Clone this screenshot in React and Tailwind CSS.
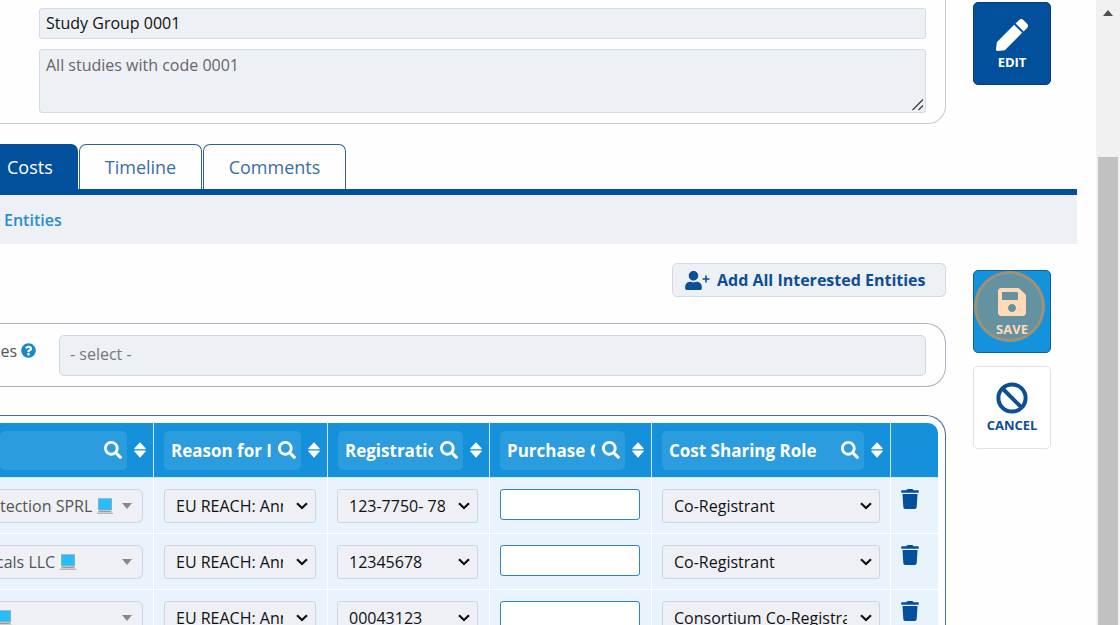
import React from "react";
import { FaPen, FaSave, FaSearch, FaTrash, FaUser, FaQuestionCircle } from "react-icons/fa";

const rows = [
  { entity: "tection SPRL", reason: "EU REACH: Annex VII", registration: "123-7750- 78", role: "Co-Registrant", shift: "" },
  { entity: "cals LLC", reason: "EU REACH: Annex VII", registration: "12345678", role: "Co-Registrant", shift: "-ml-1" },
  { entity: "", reason: "EU REACH: Annex VII", registration: "00043123", role: "Consortium Co-Registrant", shift: "-ml-1" },
];

const headers = ["", "Reason for Interest", "Registration", "Purchase Order", "Cost Sharing Role"];

function SortIcon() {
  return (
    <svg viewBox="0 0 12 16" className="h-4 w-3" fill="currentColor" aria-hidden="true">
      <path d="M6 0.2 L11.6 6.2 Q12 7.2 11 7.2 H1 Q0 7.2 0.4 6.2 Z" />
      <path d="M6 15.8 L11.6 9.6 Q12 8.6 11 8.6 H1 Q0 8.6 0.4 9.6 Z" />
    </svg>
  );
}

function Laptop() {
  return (
    <svg viewBox="0 0 16 16" className="h-4 w-4 shrink-0" aria-hidden="true">
      <path d="M1 0.2 H15 V12.4 H1 Z" fill="#b3aaa6" />
      <path d="M1.6 0.8 H14.4 V11.6 H1.6 Z" fill="#26bdf8" />
      <path d="M1.5 12.4 H14.5 L16 15.5 H0 Z" fill="#cfcfd1" />
      <path d="M2.4 12.7 H13.6 L14 13.9 H2 Z" fill="#99999b" />
      <path d="M0 15 H16 V16 H0 Z" fill="#b5b5b8" />
    </svg>
  );
}

function Dropdown({ label, value }) {
  return (
    <div className="relative">
      <select
        aria-label={label}
        defaultValue={value}
        className="block h-[34px] w-full appearance-none rounded-[3px] border border-[#cbd5e3] bg-[#eef0f5] pr-8 pb-[1px] pl-[11px] text-base text-[#111]"
      >
        <option>{value}</option>
      </select>
      <svg viewBox="0 0 12 8" className="pointer-events-none absolute top-[13px] right-2 h-2 w-3" fill="none" stroke="#111" strokeWidth="2.2" aria-hidden="true">
        <path d="M1 1.2 L6 6 L11 1.2" />
      </svg>
    </div>
  );
}

export default function App() {
  return (
    <div className="flex h-screen overflow-hidden bg-[#fefefe] font-['Open_Sans','Noto_Sans',sans-serif] text-base text-[#555]">
      <main className="min-w-0 flex-1 overflow-hidden pr-[19px]">
        <section className="flex items-start gap-[27px] pr-[26px]">
          <div className="flex min-w-0 flex-1 flex-col gap-[10px] rounded-br-[18px] border-r border-b border-[#c3ccd6] pt-2 pr-[19px] pb-[10px] pl-[39px]">
            <input
              aria-label="Name"
              defaultValue="Study Group 0001"
              className="h-[31px] w-full rounded-[3px] border border-[#d3dbe6] bg-[#edf0f5] px-[6px] pb-[1px] text-[#111]"
            />
            <div className="relative">
              <textarea
                aria-label="Description"
                defaultValue="All studies with code 0001"
                className="block h-16 w-full resize-none rounded-[3px] border border-[#d3dbe6] bg-[#edf0f5] px-[6px] py-[3px] text-[#666]"
              />
              <svg viewBox="0 0 12 12" className="absolute right-[2px] bottom-[2px] h-3 w-3" stroke="#444" strokeWidth="1.4" aria-hidden="true">
                <path d="M0.5 11 L11 0.5 M6.5 11 L11 6.5" />
              </svg>
            </div>
          </div>
          <button className="mt-[2px] flex h-[83px] w-[78px] flex-col items-center rounded-[5px] border border-[#083d75] bg-[#02509c] pt-4 text-[13px] font-bold text-white">
            <FaPen className="h-8 w-8" />
            <span className="mt-[2px] leading-[18px]">EDIT</span>
          </button>
        </section>

        <nav className="mt-5">
          <div className="flex h-[45px] gap-[1px] text-lg">
            <a href="#costs" className="flex w-[78px] items-center rounded-tr-[7px] bg-[#02509c] pl-[7px] text-white">Costs</a>
            <a href="#timeline" className="flex w-[123px] items-center justify-center rounded-t-[7px] border border-b-0 border-[#2d639a] text-[#386fa8]">Timeline</a>
            <a href="#comments" className="flex w-[143px] items-center justify-center rounded-t-[7px] border border-b-0 border-[#2d639a] text-[#386fa8]">Comments</a>
          </div>
          <div className="flex h-[55px] items-center border-t-[6px] border-[#02509c] bg-[#edf0f5] pl-1">
            <a href="#entities" className="font-semibold text-[#2a8dca]">Entities</a>
          </div>
        </nav>

        <section className="flex items-start gap-[27px] pr-[26px]">
          <div className="min-w-0 flex-1 pt-[19px]">
            <div className="flex justify-end">
              <button className="flex h-[34px] w-[274px] items-center gap-[7px] rounded-[5px] border border-[#d3dae4] bg-[#edf0f5] pl-3 text-[#0c4f94]">
                <span className="flex items-start">
                  <FaUser className="h-[19px] w-[17px]" />
                  <svg viewBox="0 0 8 8" className="mt-1 h-2 w-2" stroke="currentColor" strokeWidth="1.6" aria-hidden="true">
                    <path d="M4 0.5 V7.5 M0.5 4 H7.5" />
                  </svg>
                </span>
                <span className="whitespace-nowrap font-bold">Add All Interested Entities</span>
              </button>
            </div>

            <div className="mt-[26px] flex h-16 items-start rounded-r-[20px] border border-l-0 border-[#a9b3c0] pt-[11px] pr-[19px]">
              <label htmlFor="entities" className="mt-1 flex w-[17px] shrink-0 justify-end overflow-hidden">es</label>
              <FaQuestionCircle className="mt-2 ml-1 h-[15px] w-[15px] shrink-0 text-[#1887cc]" />
              <select id="entities" defaultValue="- select -" className="ml-[23px] h-[41px] min-w-0 flex-1 appearance-none rounded-[5px] border border-[#d0d7e1] bg-[#edf0f5] px-[10px] pb-1 text-[#777]">
                <option>- select -</option>
              </select>
            </div>

            <div className="mt-7 rounded-tr-[20px] border-t border-r border-[#476f98] pt-[7px] pr-[7px]">
              <table className="w-full table-fixed border-separate border-spacing-0 overflow-hidden rounded-tr-[10px]">
                <colgroup>
                  <col />
                  <col className="w-[174px]" />
                  <col className="w-[162px]" />
                  <col className="w-[162px]" />
                  <col className="w-[239px]" />
                  <col className="w-12" />
                </colgroup>
                <thead>
                  <tr className="h-[55px] bg-[#1590da] text-white">
                    {headers.map((title, i) => (
                      <th key={i} className={i === 0 ? "border-b border-white/80 p-0 pr-[7px]" : "border-b border-l border-white/80 p-0 pr-[7px] pl-[10px]"}>
                        <div className="flex items-center gap-[7px]">
                          <div className="flex h-[39px] min-w-0 flex-1 items-center gap-[7px] rounded-[5px] bg-[#2b9cde] pr-[5px] pl-[7px]">
                            <input aria-label={title || "Entity"} placeholder={title} className="w-0 min-w-0 flex-1 bg-transparent pt-[2px] text-[17px] font-bold outline-none placeholder:text-white" />
                            <button aria-label="Search" className="shrink-0"><FaSearch className="h-[18px] w-[18px]" /></button>
                          </div>
                          <button aria-label="Sort" className="shrink-0"><SortIcon /></button>
                        </div>
                      </th>
                    ))}
                    <th aria-label="Delete" className="border-b border-l border-white/80" />
                  </tr>
                </thead>
                <tbody>
                  {rows.map((r, i) => (
                    <tr key={i} className="h-14 bg-[#e8f3fb] align-top">
                      <td className="border-b border-white p-0 pt-[11px] pr-[10px]">
                        <button className="flex h-[34px] w-full items-center justify-between overflow-hidden rounded-r-[6px] border border-l-0 border-[#cbd5e3] bg-[#eef0f5] pr-[10px] pb-[1px] text-[#555]">
                          <span className={`flex items-center gap-[5px] whitespace-nowrap ${r.shift}`}>
                            {r.entity && <span>{r.entity}</span>}
                            <Laptop />
                          </span>
                          <svg viewBox="0 0 10 6" className="h-[6px] w-[10px] shrink-0" fill="#888" aria-hidden="true">
                            <path d="M0 0 H10 L5 6 Z" />
                          </svg>
                        </button>
                      </td>
                      <td className="border-b border-l border-white p-0 pt-[11px] pr-[11px] pl-[10px]"><Dropdown label="Reason for Interest" value={r.reason} /></td>
                      <td className="border-b border-l border-white p-0 pt-[11px] pr-[11px] pl-[9px]"><Dropdown label="Registration" value={r.registration} /></td>
                      <td className="border-b border-l border-white p-0 pt-[11px] pr-[11px] pl-[10px]">
                        <input aria-label="Purchase Order" className="block h-[31px] w-full rounded-[3px] border border-[#2d86b5] bg-white px-2" />
                      </td>
                      <td className="border-b border-l border-white p-0 pt-[11px] pr-[10px] pl-[10px]"><Dropdown label="Cost Sharing Role" value={r.role} /></td>
                      <td className="border-b border-l border-white p-0 pt-[11px] pl-[10px]">
                        <button aria-label="Delete row" className="block text-[#02509c]"><FaTrash className="h-5 w-[18px]" /></button>
                      </td>
                    </tr>
                  ))}
                </tbody>
              </table>
            </div>
          </div>

          <div className="flex flex-col gap-[13px] pt-[26px]">
            <button className="relative flex h-[83px] w-[78px] flex-col items-center rounded-[5px] border border-[#12608f] bg-[#1493dc] pt-[15px] text-[13px] font-bold text-white">
              <FaSave className="h-8 w-8" />
              <span className="mt-[2px] leading-[18px]">SAVE</span>
              <span className="absolute top-0 left-0 h-[71px] w-[71px] rounded-full border-[3px] border-[rgba(255,144,46,0.4)] bg-[rgba(255,144,46,0.34)]" />
            </button>
            <button className="flex h-[83px] w-[78px] flex-col items-center rounded-[5px] border border-[#dfe3e8] bg-white pt-[15px] text-[13px] font-bold text-[#0c4f94]">
              <svg viewBox="0 0 32 32" className="h-8 w-8" fill="none" stroke="currentColor" strokeWidth="4" aria-hidden="true">
                <circle cx="16" cy="16" r="13.6" />
                <path d="M6.5 6.5 L25.5 25.5" />
              </svg>
              <span className="mt-[2px] leading-[18px]">CANCEL</span>
            </button>
          </div>
        </section>
      </main>

      <div className="flex w-6 shrink-0 flex-col items-center bg-[#f1f1f1]" aria-hidden="true">
        <svg viewBox="0 0 10 6" className="mt-[10px] h-[6px] w-[10px]" fill="#505050">
          <path d="M5 0 L10 6 H0 Z" />
        </svg>
        <div className="mt-[141px] w-5 flex-1 bg-[#c1c1c1]" />
      </div>
    </div>
  );
}
